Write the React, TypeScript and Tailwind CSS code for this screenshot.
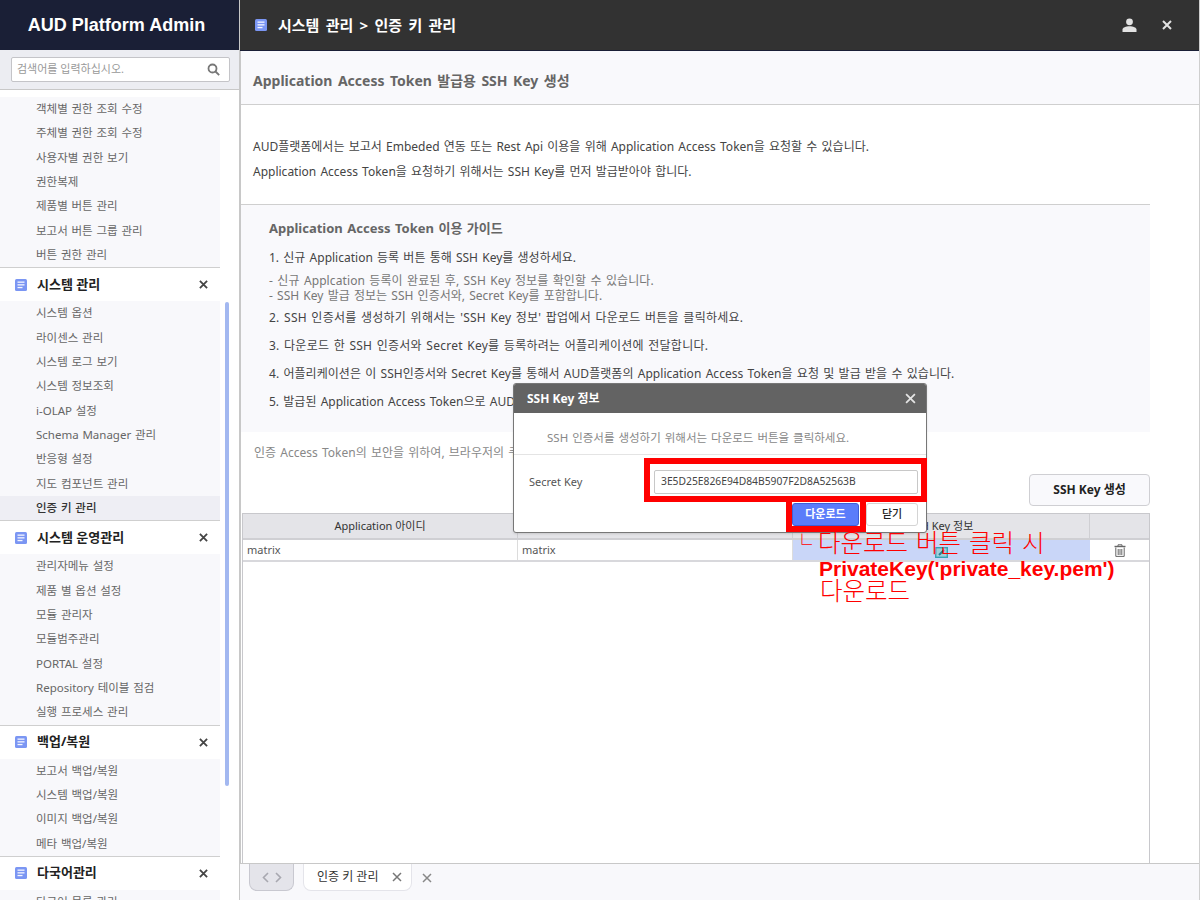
import React from "react";

const font = '"Noto Sans","Noto Sans CJK KR",sans-serif';

function DocIcon({ className = "" }: { className?: string }) {
  return (
    <svg width="12" height="12" viewBox="0 0 12 12" className={className}>
      <rect width="12" height="12" rx="1.5" fill="#7b96f3" />
      <rect x="2.5" y="2.5" width="7" height="1.3" fill="#f4f6ff" />
      <rect x="2.5" y="5.2" width="7" height="1.3" fill="#f4f6ff" />
      <rect x="2.5" y="7.9" width="5" height="1.3" fill="#f4f6ff" />
    </svg>
  );
}

function X({ size = 9, color = "#444", w = 2 }: { size?: number; color?: string; w?: number }) {
  return (
    <svg width={size} height={size} viewBox="0 0 10 10">
      <path d="M1 1L9 9M9 1L1 9" stroke={color} strokeWidth={w} fill="none" />
    </svg>
  );
}

function Group({ title, items, active }: { title: string; items: string[]; active?: string }) {
  return (
    <div>
      <div className="flex h-[34px] items-center border-t border-[#cfcfcf] bg-white pl-[15px] pr-[12px]">
        <DocIcon className="shrink-0" />
        <span className="ml-[10px] flex-1 text-[13px] font-bold leading-none text-[#222] -mt-[1px]">{title}</span>
        <X />
      </div>
      <Items items={items} active={active} />
    </div>
  );
}

function Items({ items, active }: { items: string[]; active?: string }) {
  return (
    <div className="bg-[#f8f8fb]">
      {items.map((t) => (
        <div
          key={t}
          className={`flex h-[24.33px] items-center pb-[1px] pl-[36px] text-[11.5px] [word-spacing:0.8px] ${
            t === active ? "bg-[#eeeef4] font-medium text-[#333]" : "text-[#666]"
          }`}
        >
          {t}
        </div>
      ))}
    </div>
  );
}

function Sidebar() {
  return (
    <aside className="flex h-full w-[240px] shrink-0 flex-col border-r border-[#c8c8c8]">
      <div className="flex h-[50px] shrink-0 items-center justify-center bg-[#1a1f36] pr-[6px] text-[18px] font-bold text-white" style={{ fontFamily: '"Liberation Sans",sans-serif' }}>
        AUD Platform Admin
      </div>
      <div className="flex h-[40px] shrink-0 items-center border-b border-[#c8c8c8] bg-[#ecedf2] pl-[11px] pr-[9px]">
        <div className="flex h-[25px] w-full items-center justify-between rounded-[2px] border border-[#c4c4c8] bg-white pl-[5px] pr-[9px]">
          <span className="text-[11px] text-[#999]">검색어를 입력하십시오.</span>
          <svg width="13" height="13" viewBox="0 0 13 13" fill="none" stroke="#777" strokeWidth="1.8">
            <circle cx="5.5" cy="5.5" r="4" />
            <path d="M8.5 8.5L12.2 12.2" />
          </svg>
        </div>
      </div>
      <div className="relative flex-1 overflow-hidden bg-white pt-[7px]">
        <div className="w-[220px]">
          <Items items={["객체별 권한 조회 수정", "주체별 권한 조회 수정", "사용자별 권한 보기", "권한복제", "제품별 버튼 관리", "보고서 버튼 그룹 관리", "버튼 권한 관리"]} />
          <Group title="시스템 관리" active="인증 키 관리" items={["시스템 옵션", "라이센스 관리", "시스템 로그 보기", "시스템 정보조회", "i-OLAP 설정", "Schema Manager 관리", "반응형 설정", "지도 컴포넌트 관리", "인증 키 관리"]} />
          <Group title="시스템 운영관리" items={["관리자메뉴 설정", "제품 별 옵션 설정", "모듈 관리자", "모듈범주관리", "PORTAL 설정", "Repository 테이블 점검", "실행 프로세스 관리"]} />
          <Group title="백업/복원" items={["보고서 백업/복원", "시스템 백업/복원", "이미지 백업/복원", "메타 백업/복원"]} />
          <Group title="다국어관리" items={["다국어 목록 관리"]} />
        </div>
        <div className="absolute left-[225px] top-[212px] h-[484px] w-[4px] rounded-full bg-[#a3b8f0]" />
      </div>
    </aside>
  );
}

function TopBar() {
  return (
    <header className="flex h-[51px] shrink-0 items-center border-b border-[#1a1f36] bg-[#323232] pl-[15px] pr-[27px]">
      <DocIcon />
      <span className="ml-[11px] flex-1 text-[15px] font-bold text-white [word-spacing:2.4px]">시스템 관리 &gt; 인증 키 관리</span>
      <svg width="15" height="14" viewBox="0 0 15 14" fill="#e2e2e2">
        <circle cx="7.5" cy="3.8" r="3.4" />
        <path d="M0.5 14V11.5C0.5 9.6 4 8.3 7.5 8.3S14.5 9.6 14.5 11.5V14Z" />
      </svg>
      <span className="ml-[25px] flex"><X size={10} color="#e2e2e2" /></span>
    </header>
  );
}

function Guide() {
  return (
    <section className="mr-[49px] h-[228px] shrink-0 border-t border-[#cfcfcf] bg-[#f9f9fc] pl-[28px] pt-[14px] text-[12px] text-[#444] [word-spacing:1.1px]">
      <h3 className="h-[20px] text-[13px] font-bold leading-[18px] text-[#666]">Application Access Token 이용 가이드</h3>
      <p className="mt-[9px] leading-[20px]">1. 신규 Application 등록 버튼 통해 SSH Key를 생성하세요.</p>
      <p className="mt-[5px] leading-[15px] tracking-[0.1px] text-[#777]">- 신규 Applcation 등록이 완료된 후, SSH Key 정보를 확인할 수 있습니다.</p>
      <p className="leading-[15px] text-[#777]">- SSH Key 발급 정보는 SSH 인증서와, Secret Key를 포함합니다.</p>
      <p className="mt-[5px] leading-[20px] tracking-[0.25px]">2. SSH 인증서를 생성하기 위해서는 'SSH Key 정보' 팝업에서 다운로드 버튼을 클릭하세요.</p>
      <p className="mt-[8px] leading-[20px] tracking-[0.25px]">3. 다운로드 한 SSH 인증서와 Secret Key를 등록하려는 어플리케이션에 전달합니다.</p>
      <p className="mt-[8px] leading-[20px] tracking-[0.04px]">4. 어플리케이션은 이 SSH인증서와 Secret Key를 통해서 AUD플랫폼의 Application Access Token을 요청 및 발급 받을 수 있습니다.</p>
      <p className="mt-[8px] leading-[20px]">5. 발급된 Application Access Token으로 AUD플랫폼의 API를 호출할 수 있습니다.</p>
    </section>
  );
}

function Table() {
  const grid = "grid grid-cols-[275px_275px_297px_1fr]";
  return (
    <div className="ml-[1px] mr-[49px] flex-1 border border-b-0 border-[#c8c8cc]">
      <div className={`${grid} h-[26px] items-center border-b-2 border-[#cfcfd3] bg-[#e4e4e8] text-center text-[11px] text-[#333]`}>
        <div className="flex h-full items-center justify-center border-r border-[#cfcfd3]">Application 아이디</div>
        <div className="flex h-full items-center justify-center border-r border-[#cfcfd3]">Application 이름</div>
        <div className="flex h-full items-center justify-center border-r border-[#cfcfd3]">SSH Key 정보</div>
        <div />
      </div>
      <div className={`${grid} h-[22px] border-b-2 border-[#d8d8dc] text-[11px] text-[#555]`}>
        <div className="flex items-center border-r border-[#dcdcdc] pl-[4px]">matrix</div>
        <div className="flex items-center border-r border-[#dcdcdc] pl-[4px]">matrix</div>
        <div className="flex items-center justify-center border-r border-[#c9d6f8] bg-[#c9d6f8]">
          <svg width="13" height="11" viewBox="0 0 13 11" className="mt-[5px]">
            <rect x="0.7" y="0.7" width="11.6" height="9.6" fill="#9fd0dc" stroke="#36a3b5" strokeWidth="1.4" />
            <path d="M4 8L9 3" stroke="#2a7f95" strokeWidth="2" />
          </svg>
        </div>
        <div className="flex items-center justify-center">
          <svg width="12" height="13" viewBox="0 0 12 13" fill="none" stroke="#666" strokeWidth="1">
            <path d="M0.5 2.5H11.5" strokeWidth="1.4" />
            <path d="M4 2V0.8H8V2" />
            <path d="M1.8 3.5V12.4H10.2V3.5" />
            <path d="M4.2 5V11M6 5V11M7.8 5V11" />
          </svg>
        </div>
      </div>
    </div>
  );
}

function Dialog() {
  return (
    <div className="absolute left-[273px] top-[383px] h-[150px] w-[414px] rounded-[3px] border border-[#777] bg-white shadow-sm">
      <div className="flex h-[29px] items-center justify-between rounded-t-[2px] bg-[#636363] pl-[13px] pr-[10px] text-[12px] font-bold text-white">
        <span>SSH Key 정보</span>
        <X size={11} color="#e4e4e4" w={1.6} />
      </div>
      <p className="mt-[16px] h-[26px] border-b border-[#e4e4e4] pl-[33px] text-[11.5px] leading-[18px] text-[#888] [word-spacing:1px]">SSH 인증서를 생성하기 위해서는 다운로드 버튼을 클릭하세요.</p>
      <div className="mt-[14px] flex h-[25px] items-center pl-[15px] pr-[8px]">
        <span className="w-[125px] pt-[1px] text-[11px] text-[#555]">Secret Key</span>
        <div className="flex h-[24px] flex-1 items-center rounded-[2px] border border-[#c8c8c8] pl-[6px] text-[10.3px] text-[#444]">3E5D25E826E94D84B5907F2D8A52563B</div>
      </div>
      <div className="mt-[9px] flex justify-end gap-[7px] pr-[8px]">
        <button className="h-[23px] w-[67px] rounded-[3px] border border-[#3f5fd8] bg-[#5b7cfa] text-[11px] font-bold text-white">다운로드</button>
        <button className="h-[23px] w-[52px] rounded-[3px] border border-[#d4d4d4] bg-white text-[11px] font-medium text-[#222]">닫기</button>
      </div>
    </div>
  );
}

export default function App() {
  return (
    <div className="flex h-screen w-full overflow-hidden bg-white" style={{ fontFamily: font }}>
      <Sidebar />
      <main className="relative flex h-full min-w-0 flex-1 flex-col border-r border-[#cfcfcf]">
        <TopBar />
        <div className="flex min-h-0 flex-1 flex-col border-l border-[#c8c8c8]">
          <div className="flex h-[54px] shrink-0 items-center border-b border-[#cfcfcf] bg-[#f9f9fc] pl-[12px] pt-[5px] text-[14px] font-bold text-[#666] [word-spacing:1.8px]">
            Application Access Token 발급용 SSH Key 생성
          </div>
          <div className="h-[99px] shrink-0 pl-[12px] pt-[29px] text-[12px] leading-[25px] text-[#444] [word-spacing:1.1px]">
            <p>AUD플랫폼에서는 보고서 Embeded 연동 또는 Rest Api 이용을 위해 Application Access Token을 요청할 수 있습니다.</p>
            <p>Application Access Token을 요청하기 위해서는 SSH Key를 먼저 발급받아야 합니다.</p>
          </div>
          <Guide />
          <p className="mt-[11px] h-[20px] shrink-0 pl-[13px] text-[12px] leading-[20px] text-[#888] [word-spacing:1.1px]">인증 Access Token의 보안을 위하여, 브라우저의 쿠키를 사용하지 않습니다.</p>
          <div className="mr-[49px] mt-[11px] flex shrink-0 justify-end">
            <button className="h-[32px] w-[121px] rounded-[4px] border border-[#cfcfd3] bg-[#f9f9fc] text-[12px] font-bold text-[#222]">SSH Key 생성</button>
          </div>
          <div className="mt-[7px] flex min-h-0 flex-1 flex-col">
            <Table />
          </div>
        </div>
        <footer className="flex h-[37px] shrink-0 border-t border-[#c8c8c8] bg-[#f8f8fb] pl-[9px]">
          <div className="flex h-[27px] w-[45px] items-center justify-center gap-[6px] rounded-b-[8px] border border-t-0 border-[#c8c8d0] bg-[#e4e4ea]">
            <svg width="7" height="11" viewBox="0 0 7 11" fill="none" stroke="#a8a8b0" strokeWidth="1.6"><path d="M6 1L1.5 5.5L6 10" /></svg>
            <svg width="7" height="11" viewBox="0 0 7 11" fill="none" stroke="#a8a8b0" strokeWidth="1.6"><path d="M1 1L5.5 5.5L1 10" /></svg>
          </div>
          <div className="ml-[9px] flex h-[27px] w-[109px] items-center rounded-b-[8px] border border-t-0 border-[#e4e4ea] bg-white pl-[13px] text-[12px] text-[#333]">
            <span className="flex-1">인증 키 관리</span>
            <span className="mr-[9px] flex"><X size={10} color="#777" w={1.5} /></span>
          </div>
          <span className="ml-[10px] mt-[9px] flex h-[10px]"><X size={10} color="#888" w={1.5} /></span>
        </footer>
        <Dialog />
        {/* red annotation boxes */}
        <div className="absolute left-[404px] top-[458px] h-[44px] w-[283px] border-[6px] border-[#ff0000]" />
        <div className="absolute left-[546px] top-[502px] h-[30px] w-[80px] border-[6px] border-t-0 border-[#ff0000]" />
        <div className="absolute left-[552px] top-[528px] whitespace-nowrap text-[24.5px] font-light leading-[30px] text-[#ff0000] [word-spacing:1.5px]"><span className="inline-block w-[26px] text-[20px]">└</span>다운로드 버튼 클릭 시</div>
        <div className="absolute left-[579px] top-[555px] whitespace-nowrap text-[21px] font-bold leading-[28px] text-[#ff0000]" style={{ fontFamily: '"Liberation Sans",sans-serif' }}>PrivateKey('private_key.pem')</div>
        <div className="absolute left-[580px] top-[576px] whitespace-nowrap text-[24.5px] font-light leading-[30px] text-[#ff0000]">다운로드</div>
      </main>
    </div>
  );
}
